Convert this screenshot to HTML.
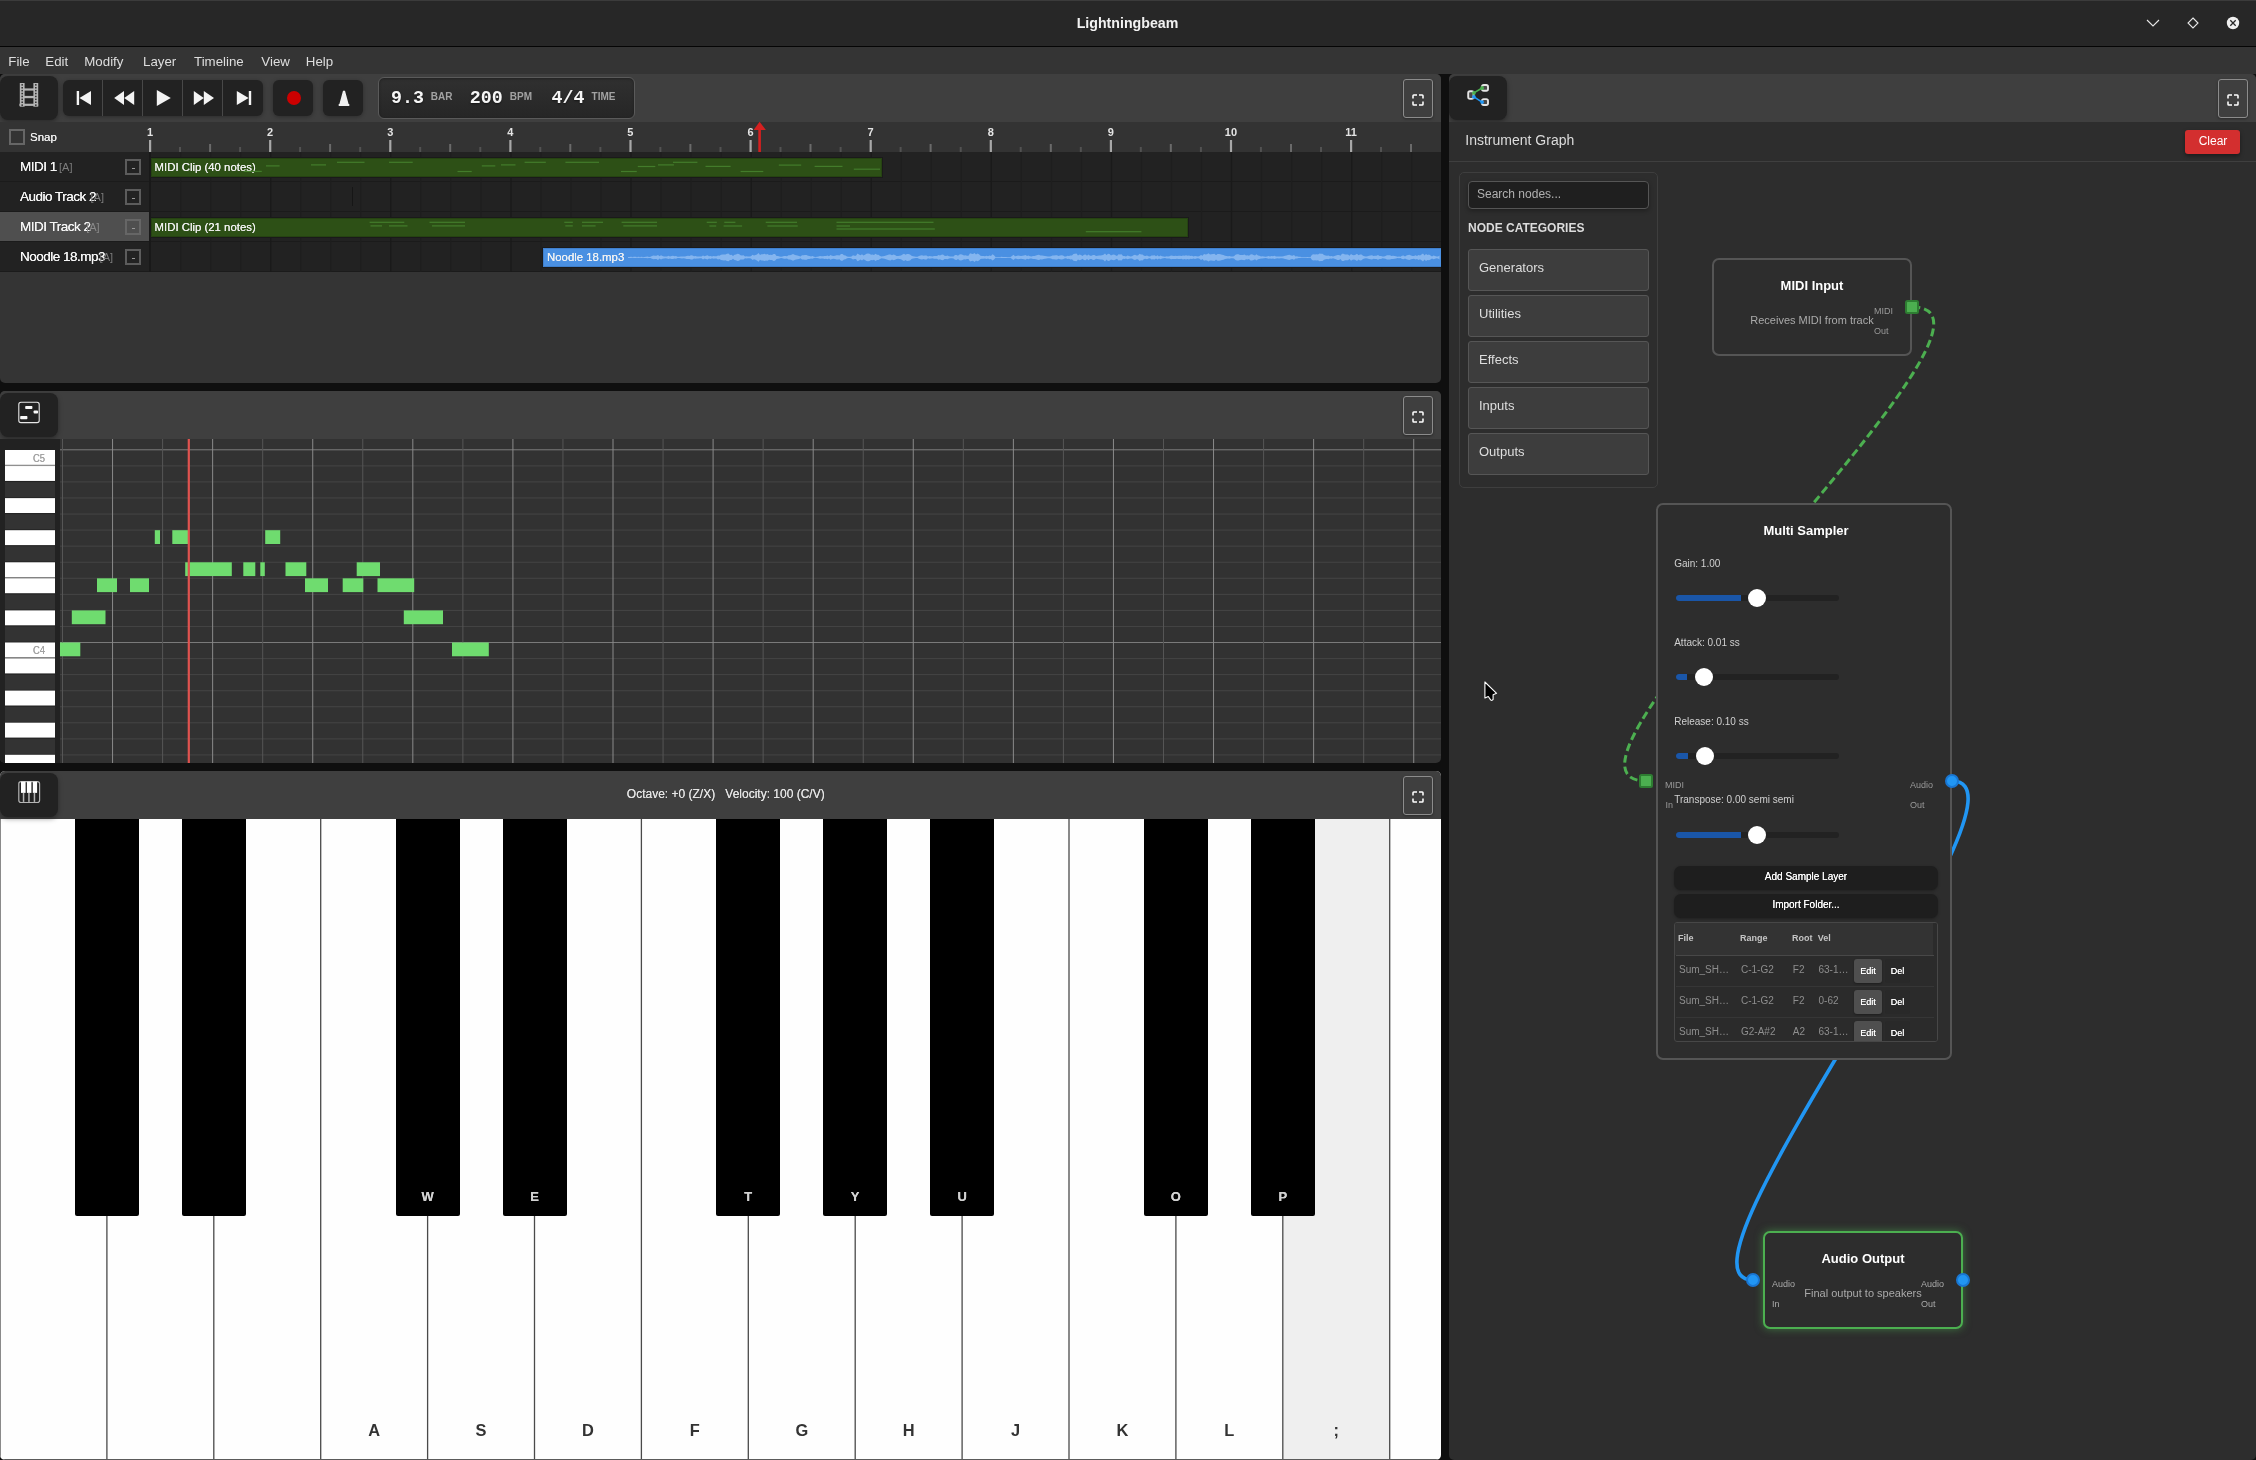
<!DOCTYPE html>
<html><head><meta charset="utf-8"><title>Lightningbeam</title>
<style>
html,body{margin:0;padding:0;}
body{width:2256px;height:1460px;overflow:hidden;background:#0f0f0f;position:relative;font-family:"Liberation Sans",sans-serif;}
div{position:absolute;box-sizing:border-box;}
svg{position:absolute;overflow:visible;}
.t{white-space:nowrap;}
</style></head><body><div id="root" style="left:0;top:0;width:2256px;height:1460px;will-change:transform;">

<div style="left:0px;top:0px;width:2256px;height:46px;background:#272727;border-top:1px solid #3b3b3b;"></div>
<div style="left:0px;top:46px;width:2256px;height:1px;background:#050505;"></div>
<div class="t" style="left:827.5px;width:600px;text-align:center;top:16.48px;font-size:14.2px;line-height:14.2px;height:14.2px;color:#f2f2f2;font-weight:bold;">Lightningbeam</div>
<svg style="left:2140px;top:10px" width="110" height="26" viewBox="2140 10 110 26">
<path d="M2147 20 L2153 26 L2159 20" fill="none" stroke="#e8e8e8" stroke-width="1.1"/>
<path d="M2193 18 L2198 23 L2193 28 L2188 23 Z" fill="none" stroke="#e8e8e8" stroke-width="1.1"/>
<circle cx="2233" cy="23" r="6.2" fill="#f0f0f0"/>
<path d="M2230.3 20.3 L2235.7 25.7 M2235.7 20.3 L2230.3 25.7" stroke="#272727" stroke-width="1.3"/>
</svg>
<div style="left:0px;top:47px;width:2256px;height:27px;background:#343434;"></div>
<div class="t" style="left:8.3px;top:54.74px;font-size:13.3px;line-height:13.3px;height:13.3px;color:#dedede;font-weight:normal;">File</div>
<div class="t" style="left:45.3px;top:54.74px;font-size:13.3px;line-height:13.3px;height:13.3px;color:#dedede;font-weight:normal;">Edit</div>
<div class="t" style="left:84.3px;top:54.74px;font-size:13.3px;line-height:13.3px;height:13.3px;color:#dedede;font-weight:normal;">Modify</div>
<div class="t" style="left:143px;top:54.74px;font-size:13.3px;line-height:13.3px;height:13.3px;color:#dedede;font-weight:normal;">Layer</div>
<div class="t" style="left:194px;top:54.74px;font-size:13.3px;line-height:13.3px;height:13.3px;color:#dedede;font-weight:normal;">Timeline</div>
<div class="t" style="left:261.3px;top:54.74px;font-size:13.3px;line-height:13.3px;height:13.3px;color:#dedede;font-weight:normal;">View</div>
<div class="t" style="left:305.8px;top:54.74px;font-size:13.3px;line-height:13.3px;height:13.3px;color:#dedede;font-weight:normal;">Help</div>
<div style="left:0px;top:74px;width:1441px;height:309px;background:#343434;border-radius:5px;overflow:hidden;">
<div style="left:0px;top:0px;width:1441px;height:48px;background:#3f3f3f;"></div>
<div style="left:0px;top:2px;width:58px;height:44px;background:#222;border-radius:8px;box-shadow:0 2px 5px rgba(0,0,0,.35);"></div>
<svg style="left:16px;top:6px" width="28" height="30" viewBox="16 80 28 30">
<g fill="#b5b5b5">
<rect x="19.8" y="83" width="4.8" height="23.7"/><rect x="33.4" y="83" width="4.8" height="23.7"/>
<rect x="24" y="88.4" width="10" height="2.2"/><rect x="24" y="95.9" width="10" height="2.3"/><rect x="19.4" y="103.7" width="18.8" height="2.2"/>
</g><g fill="#333">
<rect x="21.4" y="84.1" width="1.6" height="1.5"/><rect x="35" y="84.1" width="1.6" height="1.5"/>
<rect x="21.4" y="87.0" width="1.6" height="1.5"/><rect x="35" y="87.0" width="1.6" height="1.5"/>
<rect x="21.4" y="89.9" width="1.6" height="1.5"/><rect x="35" y="89.9" width="1.6" height="1.5"/>
<rect x="21.4" y="92.8" width="1.6" height="1.5"/><rect x="35" y="92.8" width="1.6" height="1.5"/>
<rect x="21.4" y="95.7" width="1.6" height="1.5"/><rect x="35" y="95.7" width="1.6" height="1.5"/>
<rect x="21.4" y="98.6" width="1.6" height="1.5"/><rect x="35" y="98.6" width="1.6" height="1.5"/>
<rect x="21.4" y="101.5" width="1.6" height="1.5"/><rect x="35" y="101.5" width="1.6" height="1.5"/>
<rect x="21.4" y="104.4" width="1.6" height="1.5"/><rect x="35" y="104.4" width="1.6" height="1.5"/>
</g>
</svg>
<div style="left:63px;top:6px;width:200px;height:36px;background:#222;border-radius:6px;box-shadow:0 1px 4px rgba(0,0,0,.3);"></div>
<div style="left:102px;top:6px;width:1px;height:36px;background:#484848;"></div>
<div style="left:142px;top:6px;width:1px;height:36px;background:#484848;"></div>
<div style="left:182px;top:6px;width:1px;height:36px;background:#484848;"></div>
<div style="left:222px;top:6px;width:1px;height:36px;background:#484848;"></div>
<svg style="left:63px;top:6px" width="300" height="36" viewBox="63 80 300 36">
<g fill="#f4f4f4">
<rect x="76.7" y="91" width="2.4" height="14"/><path d="M79.5 98 L91 91 L91 105 Z"/>
<path d="M114.2 98 L124 91 L124 105 Z"/><path d="M124.2 98 L134.2 91 L134.2 105 Z"/>
<path d="M156.8 90 L170.8 98 L156.8 106 Z"/>
<path d="M193.8 91 L203.8 98 L193.8 105 Z"/><path d="M203.8 91 L214 98 L203.8 105 Z"/>
<path d="M236.8 91 L248.6 98 L236.8 105 Z"/><rect x="248.8" y="91" width="2.4" height="14"/>
</g>
</svg>
<div style="left:273px;top:6px;width:40px;height:36px;background:#222;border-radius:6px;box-shadow:0 1px 4px rgba(0,0,0,.3);"></div>
<div style="left:287px;top:17px;width:14px;height:14px;background:#cc0000;border-radius:50%;"></div>
<div style="left:323px;top:6px;width:40px;height:36px;background:#222;border-radius:6px;box-shadow:0 1px 4px rgba(0,0,0,.3);"></div>
<svg style="left:335px;top:14px" width="20" height="20" viewBox="335 88 20 20">
<path d="M343 90.8 L345 90.8 L348.6 104 L349.3 104 L349.3 106 L338.7 106 L338.7 104 L339.4 104 Z" fill="#f0f0f0"/>
</svg>
<div style="left:378px;top:3px;width:257px;height:41.5px;border:1px solid #5a5a5a;border-radius:6px;background:linear-gradient(#303030,#262626);box-shadow:inset 0 1px 3px rgba(0,0,0,.3);"></div>
<div class="t" style="left:391px;top:15.38px;font-size:18.3px;line-height:18.3px;height:18.3px;color:#f6f6f6;font-weight:bold;font-family:'Liberation Mono', monospace;text-shadow:0 1px 2px rgba(0,0,0,.5);">9.3</div>
<div class="t" style="left:430.8px;top:17.54px;font-size:10px;line-height:10px;height:10px;color:#a2a2a2;font-weight:bold;">BAR</div>
<div class="t" style="left:469.8px;top:15.38px;font-size:18.3px;line-height:18.3px;height:18.3px;color:#f6f6f6;font-weight:bold;font-family:'Liberation Mono', monospace;text-shadow:0 1px 2px rgba(0,0,0,.5);">200</div>
<div class="t" style="left:509.8px;top:17.54px;font-size:10px;line-height:10px;height:10px;color:#a2a2a2;font-weight:bold;">BPM</div>
<div class="t" style="left:551.5px;top:15.38px;font-size:18.3px;line-height:18.3px;height:18.3px;color:#f6f6f6;font-weight:bold;font-family:'Liberation Mono', monospace;text-shadow:0 1px 2px rgba(0,0,0,.5);">4/4</div>
<div class="t" style="left:591.6px;top:17.54px;font-size:10px;line-height:10px;height:10px;color:#a2a2a2;font-weight:bold;">TIME</div>
<div style="left:1403px;top:5px;width:30px;height:39px;border:1px solid #8c8c8c;border-radius:3px;background:#3f3f3f;box-shadow:0 1px 3px rgba(0,0,0,.35);"></div>
<svg style="left:1411.2px;top:18.5px" width="14" height="14" viewBox="1411.2 92.5 14 14">
<path d="M1413.20 98.10 L1413.20 95.30 Q1413.20 94.50 1414.00 94.50 L1417.20 94.50 M1423.20 98.10 L1423.20 95.30 Q1423.20 94.50 1422.40 94.50 L1419.20 94.50 M1423.20 100.90 L1423.20 103.70 Q1423.20 104.50 1422.40 104.50 L1419.20 104.50 M1413.20 100.90 L1413.20 103.70 Q1413.20 104.50 1414.00 104.50 L1417.20 104.50 " fill="none" stroke="#ffffff" stroke-width="1.55"/>
</svg>
<div style="left:0px;top:48px;width:1441px;height:30px;background:#333;"></div>
<div style="left:9px;top:55px;width:16px;height:16px;border:2px solid #666;background:#333;"></div>
<div class="t" style="left:30px;top:57.77px;font-size:11.5px;line-height:11.5px;height:11.5px;color:#f0f0f0;font-weight:normal;text-shadow:0 0 .4px #eee;">Snap</div>
<svg style="left:150px;top:48px" width="1291" height="30" viewBox="150 122 1291 30">
<g fill="#a8a8a8"><rect x="149.0" y="140" width="2.2" height="12"/><rect x="269.1" y="140" width="2.2" height="12"/><rect x="389.2" y="140" width="2.2" height="12"/><rect x="509.3" y="140" width="2.2" height="12"/><rect x="629.4" y="140" width="2.2" height="12"/><rect x="749.5" y="140" width="2.2" height="12"/><rect x="869.6" y="140" width="2.2" height="12"/><rect x="989.7" y="140" width="2.2" height="12"/><rect x="1109.8" y="140" width="2.2" height="12"/><rect x="1229.9" y="140" width="2.2" height="12"/><rect x="1350.0" y="140" width="2.2" height="12"/></g><g fill="#6a6a6a"><rect x="209.1" y="144" width="2" height="8"/><rect x="329.1" y="144" width="2" height="8"/><rect x="449.2" y="144" width="2" height="8"/><rect x="569.3" y="144" width="2" height="8"/><rect x="689.4" y="144" width="2" height="8"/><rect x="809.5" y="144" width="2" height="8"/><rect x="929.6" y="144" width="2" height="8"/><rect x="1049.8" y="144" width="2" height="8"/><rect x="1169.8" y="144" width="2" height="8"/><rect x="1290.0" y="144" width="2" height="8"/><rect x="1410.0" y="144" width="2" height="8"/></g><g fill="#525252"><rect x="179.0" y="147" width="2" height="5"/><rect x="239.1" y="147" width="2" height="5"/><rect x="299.1" y="147" width="2" height="5"/><rect x="359.2" y="147" width="2" height="5"/><rect x="419.2" y="147" width="2" height="5"/><rect x="479.3" y="147" width="2" height="5"/><rect x="539.3" y="147" width="2" height="5"/><rect x="599.4" y="147" width="2" height="5"/><rect x="659.4" y="147" width="2" height="5"/><rect x="719.5" y="147" width="2" height="5"/><rect x="779.5" y="147" width="2" height="5"/><rect x="839.6" y="147" width="2" height="5"/><rect x="899.6" y="147" width="2" height="5"/><rect x="959.7" y="147" width="2" height="5"/><rect x="1019.7" y="147" width="2" height="5"/><rect x="1079.8" y="147" width="2" height="5"/><rect x="1139.8" y="147" width="2" height="5"/><rect x="1199.9" y="147" width="2" height="5"/><rect x="1259.9" y="147" width="2" height="5"/><rect x="1320.0" y="147" width="2" height="5"/><rect x="1380.0" y="147" width="2" height="5"/></g>
</svg>
<div class="t" style="left:-150.0px;width:600px;text-align:center;top:52.69px;font-size:11px;line-height:11px;height:11px;color:#e4e4e4;font-weight:bold;">1</div>
<div class="t" style="left:-29.899999999999977px;width:600px;text-align:center;top:52.69px;font-size:11px;line-height:11px;height:11px;color:#e4e4e4;font-weight:bold;">2</div>
<div class="t" style="left:90.19999999999999px;width:600px;text-align:center;top:52.69px;font-size:11px;line-height:11px;height:11px;color:#e4e4e4;font-weight:bold;">3</div>
<div class="t" style="left:210.29999999999995px;width:600px;text-align:center;top:52.69px;font-size:11px;line-height:11px;height:11px;color:#e4e4e4;font-weight:bold;">4</div>
<div class="t" style="left:330.4px;width:600px;text-align:center;top:52.69px;font-size:11px;line-height:11px;height:11px;color:#e4e4e4;font-weight:bold;">5</div>
<div class="t" style="left:450.5px;width:600px;text-align:center;top:52.69px;font-size:11px;line-height:11px;height:11px;color:#e4e4e4;font-weight:bold;">6</div>
<div class="t" style="left:570.5999999999999px;width:600px;text-align:center;top:52.69px;font-size:11px;line-height:11px;height:11px;color:#e4e4e4;font-weight:bold;">7</div>
<div class="t" style="left:690.6999999999999px;width:600px;text-align:center;top:52.69px;font-size:11px;line-height:11px;height:11px;color:#e4e4e4;font-weight:bold;">8</div>
<div class="t" style="left:810.8px;width:600px;text-align:center;top:52.69px;font-size:11px;line-height:11px;height:11px;color:#e4e4e4;font-weight:bold;">9</div>
<div class="t" style="left:930.8999999999999px;width:600px;text-align:center;top:52.69px;font-size:11px;line-height:11px;height:11px;color:#e4e4e4;font-weight:bold;">10</div>
<div class="t" style="left:1051.0px;width:600px;text-align:center;top:52.69px;font-size:11px;line-height:11px;height:11px;color:#e4e4e4;font-weight:bold;">11</div>
<div style="left:0px;top:78px;width:1441px;height:30px;background:#222;"></div>
<div style="left:0px;top:78px;width:149px;height:30px;background:#222;"></div>
<div style="left:0px;top:107px;width:1441px;height:1px;background:#1b1b1b;"></div>
<div class="t" style="left:20px;top:85.57px;font-size:13.5px;line-height:13.5px;height:13.5px;color:#f6f6f6;font-weight:normal;text-shadow:0 0 .5px #fff;letter-spacing:-.5px;">MIDI 1</div>
<div class="t" style="left:59px;top:88.19px;font-size:11px;line-height:11px;height:11px;color:#7d7d7d;font-weight:normal;">[A]</div>
<div style="left:125px;top:85px;width:16px;height:16px;border:2px solid #5c5c5c;"></div>
<div style="left:131.5px;top:93.6px;width:3px;height:1.2px;background:#999;"></div>
<div style="left:0px;top:108px;width:1441px;height:30px;background:#222;"></div>
<div style="left:0px;top:108px;width:149px;height:30px;background:#222;"></div>
<div style="left:0px;top:137px;width:1441px;height:1px;background:#1b1b1b;"></div>
<div class="t" style="left:20px;top:115.57px;font-size:13.5px;line-height:13.5px;height:13.5px;color:#f6f6f6;font-weight:normal;text-shadow:0 0 .5px #fff;letter-spacing:-.5px;">Audio Track 2</div>
<div class="t" style="left:90.5px;top:118.19px;font-size:11px;line-height:11px;height:11px;color:#7d7d7d;font-weight:normal;">[A]</div>
<div style="left:125px;top:115px;width:16px;height:16px;border:2px solid #5c5c5c;"></div>
<div style="left:131.5px;top:123.6px;width:3px;height:1.2px;background:#999;"></div>
<div style="left:0px;top:138px;width:1441px;height:30px;background:#222;"></div>
<div style="left:0px;top:138px;width:149px;height:30px;background:#4f4f4f;"></div>
<div style="left:0px;top:167px;width:1441px;height:1px;background:#1b1b1b;"></div>
<div class="t" style="left:20px;top:145.57px;font-size:13.5px;line-height:13.5px;height:13.5px;color:#f6f6f6;font-weight:normal;text-shadow:0 0 .5px #fff;letter-spacing:-.5px;">MIDI Track 2</div>
<div class="t" style="left:86.2px;top:148.19px;font-size:11px;line-height:11px;height:11px;color:#8a8a8a;font-weight:normal;">[A]</div>
<div style="left:125px;top:145px;width:16px;height:16px;border:2px solid #666;"></div>
<div style="left:131.5px;top:153.6px;width:3px;height:1.2px;background:#999;"></div>
<div style="left:0px;top:168px;width:1441px;height:30px;background:#222;"></div>
<div style="left:0px;top:168px;width:149px;height:30px;background:#222;"></div>
<div style="left:0px;top:197px;width:1441px;height:1px;background:#1b1b1b;"></div>
<div class="t" style="left:20px;top:175.57px;font-size:13.5px;line-height:13.5px;height:13.5px;color:#f6f6f6;font-weight:normal;text-shadow:0 0 .5px #fff;letter-spacing:-.5px;">Noodle 18.mp3</div>
<div class="t" style="left:99.6px;top:178.19px;font-size:11px;line-height:11px;height:11px;color:#7d7d7d;font-weight:normal;">[A]</div>
<div style="left:125px;top:175px;width:16px;height:16px;border:2px solid #5c5c5c;"></div>
<div style="left:131.5px;top:183.6px;width:3px;height:1.2px;background:#999;"></div>
<div style="left:149px;top:78px;width:1.5px;height:120px;background:#191919;"></div>
<svg style="left:150px;top:78px" width="1291" height="120" viewBox="150 152 1291 120">
<rect x="180.0" y="152" width="1.3" height="120" fill="#1e1e1e"/><rect x="210.1" y="152" width="1.3" height="120" fill="#1e1e1e"/><rect x="240.1" y="152" width="1.3" height="120" fill="#1e1e1e"/><rect x="270.1" y="152" width="1.3" height="120" fill="#1a1a1a"/><rect x="300.1" y="152" width="1.3" height="120" fill="#1e1e1e"/><rect x="330.1" y="152" width="1.3" height="120" fill="#1e1e1e"/><rect x="360.2" y="152" width="1.3" height="120" fill="#1e1e1e"/><rect x="390.2" y="152" width="1.3" height="120" fill="#1a1a1a"/><rect x="420.2" y="152" width="1.3" height="120" fill="#1e1e1e"/><rect x="450.2" y="152" width="1.3" height="120" fill="#1e1e1e"/><rect x="480.3" y="152" width="1.3" height="120" fill="#1e1e1e"/><rect x="510.3" y="152" width="1.3" height="120" fill="#1a1a1a"/><rect x="540.3" y="152" width="1.3" height="120" fill="#1e1e1e"/><rect x="570.3" y="152" width="1.3" height="120" fill="#1e1e1e"/><rect x="600.4" y="152" width="1.3" height="120" fill="#1e1e1e"/><rect x="630.4" y="152" width="1.3" height="120" fill="#1a1a1a"/><rect x="660.4" y="152" width="1.3" height="120" fill="#1e1e1e"/><rect x="690.4" y="152" width="1.3" height="120" fill="#1e1e1e"/><rect x="720.5" y="152" width="1.3" height="120" fill="#1e1e1e"/><rect x="750.5" y="152" width="1.3" height="120" fill="#1a1a1a"/><rect x="780.5" y="152" width="1.3" height="120" fill="#1e1e1e"/><rect x="810.5" y="152" width="1.3" height="120" fill="#1e1e1e"/><rect x="840.6" y="152" width="1.3" height="120" fill="#1e1e1e"/><rect x="870.6" y="152" width="1.3" height="120" fill="#1a1a1a"/><rect x="900.6" y="152" width="1.3" height="120" fill="#1e1e1e"/><rect x="930.6" y="152" width="1.3" height="120" fill="#1e1e1e"/><rect x="960.7" y="152" width="1.3" height="120" fill="#1e1e1e"/><rect x="990.7" y="152" width="1.3" height="120" fill="#1a1a1a"/><rect x="1020.7" y="152" width="1.3" height="120" fill="#1e1e1e"/><rect x="1050.8" y="152" width="1.3" height="120" fill="#1e1e1e"/><rect x="1080.8" y="152" width="1.3" height="120" fill="#1e1e1e"/><rect x="1110.8" y="152" width="1.3" height="120" fill="#1a1a1a"/><rect x="1140.8" y="152" width="1.3" height="120" fill="#1e1e1e"/><rect x="1170.8" y="152" width="1.3" height="120" fill="#1e1e1e"/><rect x="1200.9" y="152" width="1.3" height="120" fill="#1e1e1e"/><rect x="1230.9" y="152" width="1.3" height="120" fill="#1a1a1a"/><rect x="1260.9" y="152" width="1.3" height="120" fill="#1e1e1e"/><rect x="1291.0" y="152" width="1.3" height="120" fill="#1e1e1e"/><rect x="1321.0" y="152" width="1.3" height="120" fill="#1e1e1e"/><rect x="1351.0" y="152" width="1.3" height="120" fill="#1a1a1a"/><rect x="1381.0" y="152" width="1.3" height="120" fill="#1e1e1e"/><rect x="1411.0" y="152" width="1.3" height="120" fill="#1e1e1e"/>
</svg>
<div style="left:150.5px;top:83.5px;width:731px;height:19.5px;background:#2d5016;border:1px solid #264312;box-shadow:0 0 0 1px #1a1a1a;"></div>
<div class="t" style="left:154.5px;top:87.85px;font-size:11.4px;line-height:11.4px;height:11.4px;color:#efefef;font-weight:normal;text-shadow:0 0 .4px #fff;">MIDI Clip (40 notes)</div>
<div style="left:150.5px;top:143.5px;width:1037px;height:19.5px;background:#2d5016;border:1px solid #264312;box-shadow:0 0 0 1px #1a1a1a;"></div>
<div class="t" style="left:154.5px;top:147.85px;font-size:11.4px;line-height:11.4px;height:11.4px;color:#efefef;font-weight:normal;text-shadow:0 0 .4px #fff;">MIDI Clip (21 notes)</div>
<div style="left:543px;top:173.5px;width:900px;height:19.5px;background:#4a90e2;border:1px solid #3f7fcc;box-shadow:0 0 0 1px #1a1a1a;"></div>
<div class="t" style="left:547px;top:177.85px;font-size:11.4px;line-height:11.4px;height:11.4px;color:#efefef;font-weight:normal;text-shadow:0 0 .4px #fff;">Noodle 18.mp3</div>
<div style="left:351.5px;top:113px;width:1.2px;height:19px;background:#161616;"></div>
<svg style="left:150px;top:78px" width="1291" height="120" viewBox="150 152 1291 120">
<g fill="#437c2b"><rect x="243.6" y="170.8" width="18.2" height="1.2"/><rect x="266" y="165.3" width="13.6" height="1.2"/><rect x="311" y="164.3" width="15.0" height="1.2"/><rect x="337" y="161.7" width="27.5" height="1.2"/><rect x="389" y="161.7" width="23.7" height="1.2"/><rect x="457.5" y="170.9" width="14.2" height="1.2"/><rect x="481.8" y="165.3" width="13.5" height="1.2"/><rect x="501" y="164.3" width="14.5" height="1.2"/><rect x="524.6" y="161.7" width="21.2" height="1.2"/><rect x="565.4" y="161.7" width="33.6" height="1.2"/><rect x="621" y="170.9" width="15.8" height="1.2"/><rect x="637.8" y="165.9" width="17.5" height="1.2"/><rect x="658" y="164.3" width="15.9" height="1.2"/><rect x="673" y="161.7" width="24.4" height="1.2"/><rect x="705.5" y="165.8" width="25.1" height="1.2"/><rect x="740.6" y="170.9" width="22.7" height="1.2"/><rect x="778.8" y="164.5" width="22.4" height="1.2"/><rect x="814.6" y="165.8" width="27.9" height="1.2"/><rect x="853.8" y="168.6" width="26.2" height="1.2"/><rect x="369.6" y="221.7" width="34.7" height="1.2"/><rect x="370.5" y="225.3" width="11.5" height="1.2"/><rect x="389" y="225.3" width="18.5" height="1.2"/><rect x="429.5" y="221.7" width="35.5" height="1.2"/><rect x="432" y="225.3" width="33.0" height="1.2"/><rect x="564.3" y="221.7" width="8.5" height="1.2"/><rect x="582" y="221.7" width="21.0" height="1.2"/><rect x="565.3" y="225.3" width="7.5" height="1.2"/><rect x="582" y="225.3" width="13.6" height="1.2"/><rect x="621.6" y="221.7" width="35.4" height="1.2"/><rect x="623.3" y="225.3" width="33.7" height="1.2"/><rect x="706.7" y="221.7" width="10.1" height="1.2"/><rect x="724.3" y="221.7" width="11.1" height="1.2"/><rect x="709.4" y="225.4" width="6.8" height="1.2"/><rect x="723.6" y="225.4" width="18.5" height="1.2"/><rect x="765.7" y="221.7" width="31.3" height="1.2"/><rect x="767.4" y="225.4" width="30.3" height="1.2"/><rect x="836.5" y="221.7" width="97.0" height="1.2"/><rect x="836.5" y="225.4" width="13.5" height="1.2"/><rect x="836.5" y="228.4" width="98.3" height="1.2"/><rect x="1085.8" y="231.1" width="55.6" height="1.2"/></g>
<polygon points="628.0,256.9 629.5,256.9 631.0,256.7 632.5,257.1 634.0,256.8 635.5,256.8 637.0,257.0 638.5,256.7 640.0,257.0 641.5,256.8 643.0,257.0 644.5,256.9 646.0,256.7 647.5,256.5 649.0,256.9 650.5,256.7 652.0,256.1 653.5,255.5 655.0,255.7 656.5,255.8 658.0,254.9 659.5,256.3 661.0,255.2 662.5,256.1 664.0,256.4 665.5,256.6 667.0,256.4 668.5,255.8 670.0,256.4 671.5,255.9 673.0,255.8 674.5,256.2 676.0,256.1 677.5,256.7 679.0,256.7 680.5,256.6 682.0,256.4 683.5,256.5 685.0,256.4 686.5,255.9 688.0,255.8 689.5,255.9 691.0,255.2 692.5,255.4 694.0,256.2 695.5,256.0 697.0,256.4 698.5,256.4 700.0,256.5 701.5,256.5 703.0,255.4 704.5,256.2 706.0,255.7 707.5,255.2 709.0,256.2 710.5,255.9 712.0,256.6 713.5,256.1 715.0,256.2 716.5,256.3 718.0,255.4 719.5,255.7 721.0,254.7 722.5,254.6 724.0,254.4 725.5,254.6 727.0,253.7 728.5,253.6 730.0,254.9 731.5,254.8 733.0,256.0 734.5,254.7 736.0,254.6 737.5,253.8 739.0,254.1 740.5,255.3 742.0,255.4 743.5,255.2 745.0,256.5 746.5,256.3 748.0,256.6 749.5,256.6 751.0,256.3 752.5,254.7 754.0,255.5 755.5,255.0 757.0,254.4 758.5,253.0 760.0,255.1 761.5,254.3 763.0,254.2 764.5,253.8 766.0,254.4 767.5,254.0 769.0,255.1 770.5,254.8 772.0,254.9 773.5,253.9 775.0,254.1 776.5,255.9 778.0,256.1 779.5,256.4 781.0,256.7 782.5,256.6 784.0,256.0 785.5,256.0 787.0,256.2 788.5,255.2 790.0,255.2 791.5,254.7 793.0,254.0 794.5,254.7 796.0,255.3 797.5,255.5 799.0,255.9 800.5,256.5 802.0,255.2 803.5,255.2 805.0,255.0 806.5,255.1 808.0,255.8 809.5,255.9 811.0,256.4 812.5,256.1 814.0,256.8 815.5,257.0 817.0,256.8 818.5,256.6 820.0,256.1 821.5,256.3 823.0,256.2 824.5,255.9 826.0,256.0 827.5,255.6 829.0,256.2 830.5,255.1 832.0,255.7 833.5,256.1 835.0,255.7 836.5,255.3 838.0,255.2 839.5,255.6 841.0,254.1 842.5,254.0 844.0,255.3 845.5,255.6 847.0,256.5 848.5,256.8 850.0,256.7 851.5,256.4 853.0,255.2 854.5,255.8 856.0,255.8 857.5,253.6 859.0,254.4 860.5,255.2 862.0,254.3 863.5,255.6 865.0,254.7 866.5,253.8 868.0,253.6 869.5,253.8 871.0,254.7 872.5,254.5 874.0,255.1 875.5,253.8 877.0,254.7 878.5,254.7 880.0,255.9 881.5,256.5 883.0,256.3 884.5,256.0 886.0,255.5 887.5,255.0 889.0,254.5 890.5,254.4 892.0,255.3 893.5,254.6 895.0,255.1 896.5,255.9 898.0,256.0 899.5,255.7 901.0,255.5 902.5,254.5 904.0,253.8 905.5,254.8 907.0,253.9 908.5,254.0 910.0,254.4 911.5,255.7 913.0,256.2 914.5,256.5 916.0,256.8 917.5,256.7 919.0,256.1 920.5,255.5 922.0,255.3 923.5,255.7 925.0,255.4 926.5,255.4 928.0,256.5 929.5,256.1 931.0,256.2 932.5,256.6 934.0,256.1 935.5,256.0 937.0,256.1 938.5,255.0 940.0,255.6 941.5,254.7 943.0,254.5 944.5,255.7 946.0,255.9 947.5,255.6 949.0,256.3 950.5,256.6 952.0,256.5 953.5,256.4 955.0,255.1 956.5,254.9 958.0,255.8 959.5,254.5 961.0,254.2 962.5,254.8 964.0,255.5 965.5,255.3 967.0,255.7 968.5,255.7 970.0,253.2 971.5,253.7 973.0,254.0 974.5,252.9 976.0,254.4 977.5,253.6 979.0,254.2 980.5,255.8 982.0,256.1 983.5,256.1 985.0,256.2 986.5,255.7 988.0,256.2 989.5,255.6 991.0,255.9 992.5,254.3 994.0,255.2 995.5,257.0 997.0,257.0 998.5,257.0 1000.0,257.1 1001.5,256.8 1003.0,256.9 1004.5,256.9 1006.0,256.9 1007.5,257.1 1009.0,257.0 1010.5,257.1 1012.0,255.9 1013.5,254.8 1015.0,256.2 1016.5,256.0 1018.0,255.6 1019.5,255.7 1021.0,256.0 1022.5,255.8 1024.0,255.5 1025.5,255.1 1027.0,256.1 1028.5,255.6 1030.0,256.2 1031.5,256.4 1033.0,255.9 1034.5,255.9 1036.0,255.6 1037.5,255.1 1039.0,254.8 1040.5,255.6 1042.0,255.4 1043.5,255.8 1045.0,256.1 1046.5,256.2 1048.0,256.6 1049.5,256.6 1051.0,256.3 1052.5,255.6 1054.0,255.6 1055.5,255.3 1057.0,255.2 1058.5,256.0 1060.0,255.6 1061.5,255.2 1063.0,255.5 1064.5,256.4 1066.0,256.5 1067.5,255.7 1069.0,256.0 1070.5,255.4 1072.0,255.6 1073.5,254.1 1075.0,253.7 1076.5,253.6 1078.0,255.4 1079.5,254.5 1081.0,255.0 1082.5,256.1 1084.0,254.8 1085.5,254.6 1087.0,255.8 1088.5,254.6 1090.0,255.7 1091.5,255.8 1093.0,254.9 1094.5,255.1 1096.0,256.0 1097.5,255.7 1099.0,255.6 1100.5,255.4 1102.0,255.3 1103.5,254.7 1105.0,253.4 1106.5,255.2 1108.0,253.7 1109.5,254.1 1111.0,255.4 1112.5,254.8 1114.0,254.6 1115.5,255.3 1117.0,256.0 1118.5,254.2 1120.0,254.6 1121.5,254.3 1123.0,256.0 1124.5,255.9 1126.0,256.4 1127.5,255.5 1129.0,256.1 1130.5,256.4 1132.0,256.2 1133.5,255.2 1135.0,254.8 1136.5,255.5 1138.0,255.6 1139.5,253.8 1141.0,254.6 1142.5,254.4 1144.0,255.8 1145.5,256.1 1147.0,255.5 1148.5,256.2 1150.0,256.5 1151.5,255.4 1153.0,255.6 1154.5,255.3 1156.0,256.2 1157.5,255.2 1159.0,256.4 1160.5,255.6 1162.0,256.2 1163.5,256.6 1165.0,256.7 1166.5,256.3 1168.0,256.4 1169.5,256.3 1171.0,255.5 1172.5,255.8 1174.0,255.9 1175.5,255.8 1177.0,256.0 1178.5,255.8 1180.0,255.8 1181.5,256.0 1183.0,255.4 1184.5,255.8 1186.0,255.3 1187.5,255.7 1189.0,255.4 1190.5,256.1 1192.0,255.8 1193.5,256.4 1195.0,255.9 1196.5,256.2 1198.0,256.6 1199.5,256.1 1201.0,254.9 1202.5,255.8 1204.0,254.0 1205.5,254.5 1207.0,254.2 1208.5,253.2 1210.0,254.4 1211.5,254.2 1213.0,254.0 1214.5,253.7 1216.0,255.2 1217.5,254.0 1219.0,254.1 1220.5,254.2 1222.0,254.8 1223.5,255.0 1225.0,255.8 1226.5,256.0 1228.0,256.3 1229.5,256.1 1231.0,256.6 1232.5,256.6 1234.0,256.3 1235.5,254.7 1237.0,254.2 1238.5,254.2 1240.0,254.9 1241.5,255.0 1243.0,254.9 1244.5,254.6 1246.0,255.5 1247.5,255.2 1249.0,255.8 1250.5,254.4 1252.0,254.2 1253.5,254.9 1255.0,255.5 1256.5,254.2 1258.0,255.6 1259.5,255.7 1261.0,256.4 1262.5,256.3 1264.0,256.6 1265.5,256.8 1267.0,256.6 1268.5,256.1 1270.0,256.4 1271.5,256.0 1273.0,256.2 1274.5,255.8 1276.0,256.4 1277.5,256.5 1279.0,256.4 1280.5,256.6 1282.0,256.6 1283.5,256.3 1285.0,255.7 1286.5,255.5 1288.0,255.1 1289.5,254.7 1291.0,255.5 1292.5,255.7 1294.0,255.0 1295.5,256.4 1297.0,256.2 1298.5,256.7 1300.0,256.8 1301.5,257.1 1303.0,257.1 1304.5,257.0 1306.0,257.0 1307.5,256.9 1309.0,257.1 1310.5,257.0 1312.0,254.8 1313.5,254.3 1315.0,254.6 1316.5,254.3 1318.0,254.5 1319.5,253.5 1321.0,253.8 1322.5,253.8 1324.0,255.0 1325.5,255.6 1327.0,255.7 1328.5,255.6 1330.0,256.3 1331.5,256.1 1333.0,256.5 1334.5,256.1 1336.0,255.5 1337.5,254.9 1339.0,254.9 1340.5,255.7 1342.0,253.8 1343.5,253.8 1345.0,254.5 1346.5,254.6 1348.0,254.6 1349.5,255.7 1351.0,254.0 1352.5,255.0 1354.0,255.3 1355.5,254.8 1357.0,253.8 1358.5,255.2 1360.0,254.4 1361.5,254.5 1363.0,255.7 1364.5,256.3 1366.0,256.5 1367.5,256.2 1369.0,255.8 1370.5,255.5 1372.0,255.2 1373.5,256.0 1375.0,255.8 1376.5,255.7 1378.0,255.1 1379.5,255.9 1381.0,255.9 1382.5,256.6 1384.0,256.4 1385.5,256.0 1387.0,255.3 1388.5,255.2 1390.0,255.3 1391.5,255.9 1393.0,255.8 1394.5,256.1 1396.0,256.3 1397.5,256.8 1399.0,256.5 1400.5,256.7 1402.0,255.7 1403.5,255.5 1405.0,256.4 1406.5,255.6 1408.0,255.0 1409.5,254.7 1411.0,255.6 1412.5,255.9 1414.0,256.1 1415.5,255.3 1417.0,255.9 1418.5,254.9 1420.0,255.5 1421.5,254.5 1423.0,253.4 1424.5,255.4 1426.0,253.9 1427.5,254.9 1429.0,254.6 1430.5,255.4 1432.0,256.4 1433.5,255.5 1435.0,256.0 1436.5,256.5 1438.0,256.4 1439.5,255.4 1439.5,259.4 1438.0,258.4 1436.5,258.3 1435.0,258.8 1433.5,259.3 1432.0,258.4 1430.5,259.4 1429.0,260.2 1427.5,259.9 1426.0,260.9 1424.5,259.4 1423.0,261.4 1421.5,260.3 1420.0,259.3 1418.5,259.9 1417.0,258.9 1415.5,259.5 1414.0,258.7 1412.5,258.9 1411.0,259.2 1409.5,260.1 1408.0,259.8 1406.5,259.2 1405.0,258.4 1403.5,259.3 1402.0,259.1 1400.5,258.1 1399.0,258.3 1397.5,258.0 1396.0,258.5 1394.5,258.7 1393.0,259.0 1391.5,258.9 1390.0,259.5 1388.5,259.6 1387.0,259.5 1385.5,258.8 1384.0,258.4 1382.5,258.2 1381.0,258.9 1379.5,258.9 1378.0,259.7 1376.5,259.1 1375.0,259.0 1373.5,258.8 1372.0,259.6 1370.5,259.3 1369.0,259.0 1367.5,258.6 1366.0,258.3 1364.5,258.5 1363.0,259.1 1361.5,260.3 1360.0,260.4 1358.5,259.6 1357.0,261.0 1355.5,260.0 1354.0,259.5 1352.5,259.8 1351.0,260.8 1349.5,259.1 1348.0,260.2 1346.5,260.2 1345.0,260.3 1343.5,261.0 1342.0,261.0 1340.5,259.1 1339.0,259.9 1337.5,259.9 1336.0,259.3 1334.5,258.7 1333.0,258.3 1331.5,258.7 1330.0,258.5 1328.5,259.2 1327.0,259.1 1325.5,259.2 1324.0,259.8 1322.5,261.0 1321.0,261.0 1319.5,261.3 1318.0,260.3 1316.5,260.5 1315.0,260.2 1313.5,260.5 1312.0,260.0 1310.5,257.8 1309.0,257.7 1307.5,257.9 1306.0,257.8 1304.5,257.8 1303.0,257.7 1301.5,257.7 1300.0,258.0 1298.5,258.1 1297.0,258.6 1295.5,258.4 1294.0,259.8 1292.5,259.1 1291.0,259.3 1289.5,260.1 1288.0,259.7 1286.5,259.3 1285.0,259.1 1283.5,258.5 1282.0,258.2 1280.5,258.2 1279.0,258.4 1277.5,258.3 1276.0,258.4 1274.5,259.0 1273.0,258.6 1271.5,258.8 1270.0,258.4 1268.5,258.7 1267.0,258.2 1265.5,258.0 1264.0,258.2 1262.5,258.5 1261.0,258.4 1259.5,259.1 1258.0,259.2 1256.5,260.6 1255.0,259.3 1253.5,259.9 1252.0,260.6 1250.5,260.4 1249.0,259.0 1247.5,259.6 1246.0,259.3 1244.5,260.2 1243.0,259.9 1241.5,259.8 1240.0,259.9 1238.5,260.6 1237.0,260.6 1235.5,260.1 1234.0,258.5 1232.5,258.2 1231.0,258.2 1229.5,258.7 1228.0,258.5 1226.5,258.8 1225.0,259.0 1223.5,259.8 1222.0,260.0 1220.5,260.6 1219.0,260.7 1217.5,260.8 1216.0,259.6 1214.5,261.1 1213.0,260.8 1211.5,260.6 1210.0,260.4 1208.5,261.6 1207.0,260.6 1205.5,260.3 1204.0,260.8 1202.5,259.0 1201.0,259.9 1199.5,258.7 1198.0,258.2 1196.5,258.6 1195.0,258.9 1193.5,258.4 1192.0,259.0 1190.5,258.7 1189.0,259.4 1187.5,259.1 1186.0,259.5 1184.5,259.0 1183.0,259.4 1181.5,258.8 1180.0,259.0 1178.5,259.0 1177.0,258.8 1175.5,259.0 1174.0,258.9 1172.5,259.0 1171.0,259.3 1169.5,258.5 1168.0,258.4 1166.5,258.5 1165.0,258.1 1163.5,258.2 1162.0,258.6 1160.5,259.2 1159.0,258.4 1157.5,259.6 1156.0,258.6 1154.5,259.5 1153.0,259.2 1151.5,259.4 1150.0,258.3 1148.5,258.6 1147.0,259.3 1145.5,258.7 1144.0,259.0 1142.5,260.4 1141.0,260.2 1139.5,261.0 1138.0,259.2 1136.5,259.3 1135.0,260.0 1133.5,259.6 1132.0,258.6 1130.5,258.4 1129.0,258.7 1127.5,259.3 1126.0,258.4 1124.5,258.9 1123.0,258.8 1121.5,260.5 1120.0,260.2 1118.5,260.6 1117.0,258.8 1115.5,259.5 1114.0,260.2 1112.5,260.0 1111.0,259.4 1109.5,260.7 1108.0,261.1 1106.5,259.6 1105.0,261.4 1103.5,260.1 1102.0,259.5 1100.5,259.4 1099.0,259.2 1097.5,259.1 1096.0,258.8 1094.5,259.7 1093.0,259.9 1091.5,259.0 1090.0,259.1 1088.5,260.2 1087.0,259.0 1085.5,260.2 1084.0,260.0 1082.5,258.7 1081.0,259.8 1079.5,260.3 1078.0,259.4 1076.5,261.2 1075.0,261.1 1073.5,260.7 1072.0,259.2 1070.5,259.4 1069.0,258.8 1067.5,259.1 1066.0,258.3 1064.5,258.4 1063.0,259.3 1061.5,259.6 1060.0,259.2 1058.5,258.8 1057.0,259.6 1055.5,259.5 1054.0,259.2 1052.5,259.2 1051.0,258.5 1049.5,258.2 1048.0,258.2 1046.5,258.6 1045.0,258.7 1043.5,259.0 1042.0,259.4 1040.5,259.2 1039.0,260.0 1037.5,259.7 1036.0,259.2 1034.5,258.9 1033.0,258.9 1031.5,258.4 1030.0,258.6 1028.5,259.2 1027.0,258.7 1025.5,259.7 1024.0,259.3 1022.5,259.0 1021.0,258.8 1019.5,259.1 1018.0,259.2 1016.5,258.8 1015.0,258.6 1013.5,260.0 1012.0,258.9 1010.5,257.7 1009.0,257.8 1007.5,257.7 1006.0,257.9 1004.5,257.9 1003.0,257.9 1001.5,258.0 1000.0,257.7 998.5,257.8 997.0,257.8 995.5,257.8 994.0,259.6 992.5,260.5 991.0,258.9 989.5,259.2 988.0,258.6 986.5,259.1 985.0,258.6 983.5,258.7 982.0,258.7 980.5,259.0 979.0,260.6 977.5,261.2 976.0,260.4 974.5,261.9 973.0,260.8 971.5,261.1 970.0,261.6 968.5,259.1 967.0,259.1 965.5,259.5 964.0,259.3 962.5,260.0 961.0,260.6 959.5,260.3 958.0,259.0 956.5,259.9 955.0,259.7 953.5,258.4 952.0,258.3 950.5,258.2 949.0,258.5 947.5,259.2 946.0,258.9 944.5,259.1 943.0,260.3 941.5,260.1 940.0,259.2 938.5,259.8 937.0,258.7 935.5,258.8 934.0,258.7 932.5,258.2 931.0,258.6 929.5,258.7 928.0,258.3 926.5,259.4 925.0,259.4 923.5,259.1 922.0,259.5 920.5,259.3 919.0,258.7 917.5,258.1 916.0,258.0 914.5,258.3 913.0,258.6 911.5,259.1 910.0,260.4 908.5,260.8 907.0,260.9 905.5,260.0 904.0,261.0 902.5,260.3 901.0,259.3 899.5,259.1 898.0,258.8 896.5,258.9 895.0,259.7 893.5,260.2 892.0,259.5 890.5,260.4 889.0,260.3 887.5,259.8 886.0,259.3 884.5,258.8 883.0,258.5 881.5,258.3 880.0,258.9 878.5,260.1 877.0,260.1 875.5,261.0 874.0,259.7 872.5,260.3 871.0,260.1 869.5,261.0 868.0,261.2 866.5,261.0 865.0,260.1 863.5,259.2 862.0,260.5 860.5,259.6 859.0,260.4 857.5,261.2 856.0,259.0 854.5,259.0 853.0,259.6 851.5,258.4 850.0,258.1 848.5,258.0 847.0,258.3 845.5,259.2 844.0,259.5 842.5,260.8 841.0,260.7 839.5,259.2 838.0,259.6 836.5,259.5 835.0,259.1 833.5,258.7 832.0,259.1 830.5,259.7 829.0,258.6 827.5,259.2 826.0,258.8 824.5,258.9 823.0,258.6 821.5,258.5 820.0,258.7 818.5,258.2 817.0,258.0 815.5,257.8 814.0,258.0 812.5,258.7 811.0,258.4 809.5,258.9 808.0,259.0 806.5,259.7 805.0,259.8 803.5,259.6 802.0,259.6 800.5,258.3 799.0,258.9 797.5,259.3 796.0,259.5 794.5,260.1 793.0,260.8 791.5,260.1 790.0,259.6 788.5,259.6 787.0,258.6 785.5,258.8 784.0,258.8 782.5,258.2 781.0,258.1 779.5,258.4 778.0,258.7 776.5,258.9 775.0,260.7 773.5,260.9 772.0,259.9 770.5,260.0 769.0,259.7 767.5,260.8 766.0,260.4 764.5,261.0 763.0,260.6 761.5,260.5 760.0,259.7 758.5,261.8 757.0,260.4 755.5,259.8 754.0,259.3 752.5,260.1 751.0,258.5 749.5,258.2 748.0,258.2 746.5,258.5 745.0,258.3 743.5,259.6 742.0,259.4 740.5,259.5 739.0,260.7 737.5,261.0 736.0,260.2 734.5,260.1 733.0,258.8 731.5,260.0 730.0,259.9 728.5,261.2 727.0,261.1 725.5,260.2 724.0,260.4 722.5,260.2 721.0,260.1 719.5,259.1 718.0,259.4 716.5,258.5 715.0,258.6 713.5,258.7 712.0,258.2 710.5,258.9 709.0,258.6 707.5,259.6 706.0,259.1 704.5,258.6 703.0,259.4 701.5,258.3 700.0,258.3 698.5,258.4 697.0,258.4 695.5,258.8 694.0,258.6 692.5,259.4 691.0,259.6 689.5,258.9 688.0,259.0 686.5,258.9 685.0,258.4 683.5,258.3 682.0,258.4 680.5,258.2 679.0,258.1 677.5,258.1 676.0,258.7 674.5,258.6 673.0,259.0 671.5,258.9 670.0,258.4 668.5,259.0 667.0,258.4 665.5,258.2 664.0,258.4 662.5,258.7 661.0,259.6 659.5,258.5 658.0,259.9 656.5,259.0 655.0,259.1 653.5,259.3 652.0,258.7 650.5,258.1 649.0,257.9 647.5,258.3 646.0,258.1 644.5,257.9 643.0,257.8 641.5,258.0 640.0,257.8 638.5,258.1 637.0,257.8 635.5,258.0 634.0,258.0 632.5,257.7 631.0,258.1 629.5,257.9 628.0,257.9" fill="#84b5ef"/>
</svg>
<svg style="left:750px;top:46px" width="20" height="34" viewBox="750 120 20 34">
<path d="M759.6 121.8 L765.9 129.9 L753.6 129.9 Z" fill="#d42020"/><rect x="758.3" y="129" width="2.6" height="23" fill="#d42020"/>
</svg>
</div>
<div style="left:0px;top:391px;width:1441px;height:372px;background:#323232;border-radius:5px;overflow:hidden;">
<div style="left:0px;top:0px;width:1441px;height:48px;background:#3f3f3f;"></div>
<div style="left:0px;top:2px;width:58px;height:44px;background:#222;border-radius:8px;box-shadow:0 2px 5px rgba(0,0,0,.35);"></div>
<svg style="left:16px;top:7px" width="28" height="28" viewBox="16 398 28 28">
<rect x="18.8" y="402.2" width="20.4" height="20.4" rx="2.2" fill="none" stroke="#e8e8e8" stroke-width="1.1"/>
<g fill="#fafafa"><rect x="25.2" y="406" width="7.2" height="3" rx=".8"/><rect x="33.6" y="410.4" width="4.4" height="3.2" rx=".8"/><rect x="20.2" y="416" width="7.2" height="3.2" rx=".8"/></g>
</svg>
<div style="left:1403px;top:5px;width:30px;height:39px;border:1px solid #8c8c8c;border-radius:3px;background:#3f3f3f;box-shadow:0 1px 3px rgba(0,0,0,.35);"></div>
<svg style="left:1411.2px;top:18.5px" width="14" height="14" viewBox="1411.2 409.5 14 14">
<path d="M1413.20 415.10 L1413.20 412.30 Q1413.20 411.50 1414.00 411.50 L1417.20 411.50 M1423.20 415.10 L1423.20 412.30 Q1423.20 411.50 1422.40 411.50 L1419.20 411.50 M1423.20 417.90 L1423.20 420.70 Q1423.20 421.50 1422.40 421.50 L1419.20 421.50 M1413.20 417.90 L1413.20 420.70 Q1413.20 421.50 1414.00 421.50 L1417.20 421.50 " fill="none" stroke="#ffffff" stroke-width="1.55"/>
</svg>
<div style="left:0px;top:48px;width:60px;height:324px;background:#222;"></div>
<svg style="left:0px;top:48px" width="60" height="324" viewBox="0 439 60 324">
<rect x="5" y="450.00" width="50" height="14.9" fill="#fff"/><rect x="5" y="464.90" width="50" height="1.3" fill="#909090"/><rect x="5" y="466.04" width="50" height="14.9" fill="#fff"/><rect x="5" y="482.08" width="50" height="15.2" fill="#333"/><rect x="5" y="498.12" width="50" height="14.9" fill="#fff"/><rect x="5" y="514.16" width="50" height="15.2" fill="#333"/><rect x="5" y="530.20" width="50" height="14.9" fill="#fff"/><rect x="5" y="546.24" width="50" height="15.2" fill="#333"/><rect x="5" y="562.28" width="50" height="14.9" fill="#fff"/><rect x="5" y="577.18" width="50" height="1.3" fill="#909090"/><rect x="5" y="578.32" width="50" height="14.9" fill="#fff"/><rect x="5" y="594.36" width="50" height="15.2" fill="#333"/><rect x="5" y="610.40" width="50" height="14.9" fill="#fff"/><rect x="5" y="626.44" width="50" height="15.2" fill="#333"/><rect x="5" y="642.48" width="50" height="14.9" fill="#fff"/><rect x="5" y="657.38" width="50" height="1.3" fill="#909090"/><rect x="5" y="658.52" width="50" height="14.9" fill="#fff"/><rect x="5" y="674.56" width="50" height="15.2" fill="#333"/><rect x="5" y="690.60" width="50" height="14.9" fill="#fff"/><rect x="5" y="706.64" width="50" height="15.2" fill="#333"/><rect x="5" y="722.68" width="50" height="14.9" fill="#fff"/><rect x="5" y="738.72" width="50" height="15.2" fill="#333"/><rect x="5" y="754.76" width="50" height="14.9" fill="#fff"/><rect x="5" y="769.66" width="50" height="1.3" fill="#909090"/><rect x="5" y="770.80" width="50" height="14.9" fill="#fff"/>
</svg>
<div class="t" style="left:-555.2px;width:600px;text-align:right;top:61.77px;font-size:11.5px;line-height:11.5px;height:11.5px;color:#a2a2a2;font-weight:normal;transform:scaleX(.82);transform-origin:right center;text-shadow:0 0 .3px #999;">C5</div>
<div class="t" style="left:-555.2px;width:600px;text-align:right;top:254.17px;font-size:11.5px;line-height:11.5px;height:11.5px;color:#a2a2a2;font-weight:normal;transform:scaleX(.82);transform-origin:right center;text-shadow:0 0 .3px #999;">C4</div>
<svg style="left:60px;top:48px" width="1381" height="324" viewBox="60 439 1381 324">
<rect x="60" y="449.30" width="1381" height="1" fill="#7c7c7c"/><rect x="60" y="465.36" width="1381" height="1" fill="#454545"/><rect x="60" y="481.42" width="1381" height="1" fill="#454545"/><rect x="60" y="497.48" width="1381" height="1" fill="#454545"/><rect x="60" y="513.54" width="1381" height="1" fill="#454545"/><rect x="60" y="529.60" width="1381" height="1" fill="#454545"/><rect x="60" y="545.66" width="1381" height="1" fill="#454545"/><rect x="60" y="561.72" width="1381" height="1" fill="#454545"/><rect x="60" y="577.78" width="1381" height="1" fill="#454545"/><rect x="60" y="593.84" width="1381" height="1" fill="#454545"/><rect x="60" y="609.90" width="1381" height="1" fill="#454545"/><rect x="60" y="625.96" width="1381" height="1" fill="#454545"/><rect x="60" y="642.02" width="1381" height="1" fill="#7c7c7c"/><rect x="60" y="658.08" width="1381" height="1" fill="#454545"/><rect x="60" y="674.14" width="1381" height="1" fill="#454545"/><rect x="60" y="690.20" width="1381" height="1" fill="#454545"/><rect x="60" y="706.26" width="1381" height="1" fill="#454545"/><rect x="60" y="722.32" width="1381" height="1" fill="#454545"/><rect x="60" y="738.38" width="1381" height="1" fill="#454545"/><rect x="60" y="754.44" width="1381" height="1" fill="#454545"/><rect x="60" y="770.50" width="1381" height="1" fill="#454545"/><rect x="62.00" y="439" width="1" height="324" fill="#565656"/><rect x="112.05" y="439" width="1" height="324" fill="#8a8a8a"/><rect x="162.09" y="439" width="1" height="324" fill="#565656"/><rect x="212.13" y="439" width="1" height="324" fill="#8a8a8a"/><rect x="262.18" y="439" width="1" height="324" fill="#565656"/><rect x="312.23" y="439" width="1" height="324" fill="#8a8a8a"/><rect x="362.27" y="439" width="1" height="324" fill="#565656"/><rect x="412.31" y="439" width="1" height="324" fill="#8a8a8a"/><rect x="462.36" y="439" width="1" height="324" fill="#565656"/><rect x="512.40" y="439" width="1" height="324" fill="#8a8a8a"/><rect x="562.45" y="439" width="1" height="324" fill="#565656"/><rect x="612.50" y="439" width="1" height="324" fill="#8a8a8a"/><rect x="662.54" y="439" width="1" height="324" fill="#565656"/><rect x="712.59" y="439" width="1" height="324" fill="#8a8a8a"/><rect x="762.63" y="439" width="1" height="324" fill="#565656"/><rect x="812.68" y="439" width="1" height="324" fill="#8a8a8a"/><rect x="862.72" y="439" width="1" height="324" fill="#565656"/><rect x="912.76" y="439" width="1" height="324" fill="#8a8a8a"/><rect x="962.81" y="439" width="1" height="324" fill="#565656"/><rect x="1012.86" y="439" width="1" height="324" fill="#8a8a8a"/><rect x="1062.90" y="439" width="1" height="324" fill="#565656"/><rect x="1112.94" y="439" width="1" height="324" fill="#8a8a8a"/><rect x="1162.99" y="439" width="1" height="324" fill="#565656"/><rect x="1213.04" y="439" width="1" height="324" fill="#8a8a8a"/><rect x="1263.08" y="439" width="1" height="324" fill="#565656"/><rect x="1313.12" y="439" width="1" height="324" fill="#8a8a8a"/><rect x="1363.17" y="439" width="1" height="324" fill="#565656"/><rect x="1413.22" y="439" width="1" height="324" fill="#8a8a8a"/>
<rect x="154.8" y="530.20" width="5.2" height="13.8" fill="#6fdc6f"/><rect x="172.3" y="530.20" width="15.9" height="13.8" fill="#6fdc6f"/><rect x="265.2" y="530.20" width="15.0" height="13.8" fill="#6fdc6f"/><rect x="185.2" y="562.28" width="46.6" height="13.8" fill="#6fdc6f"/><rect x="243.3" y="562.28" width="12.0" height="13.8" fill="#6fdc6f"/><rect x="260.3" y="562.28" width="4.5" height="13.8" fill="#6fdc6f"/><rect x="285.5" y="562.28" width="20.8" height="13.8" fill="#6fdc6f"/><rect x="356.7" y="562.28" width="23.3" height="13.8" fill="#6fdc6f"/><rect x="97" y="578.32" width="20.0" height="13.8" fill="#6fdc6f"/><rect x="130" y="578.32" width="19.0" height="13.8" fill="#6fdc6f"/><rect x="305" y="578.32" width="23.0" height="13.8" fill="#6fdc6f"/><rect x="342.7" y="578.32" width="20.6" height="13.8" fill="#6fdc6f"/><rect x="377.5" y="578.32" width="36.7" height="13.8" fill="#6fdc6f"/><rect x="71.8" y="610.40" width="33.7" height="13.8" fill="#6fdc6f"/><rect x="403.8" y="610.40" width="39.2" height="13.8" fill="#6fdc6f"/><rect x="60" y="642.48" width="20.3" height="13.8" fill="#6fdc6f"/><rect x="452" y="642.48" width="36.8" height="13.8" fill="#6fdc6f"/>
<rect x="187.7" y="439" width="2.2" height="324" fill="#e0534f"/>
</svg>
</div>
<div style="left:0px;top:771px;width:1441px;height:688.5px;background:#fefefe;border-radius:5px;overflow:hidden;">
<div style="left:1282.8px;top:48px;width:106.9px;height:641px;background:#efefef;"></div>
<svg style="left:0px;top:48px" width="1441" height="641" viewBox="0 819 1441 641">
<rect x="106.25" y="819" width="1.3" height="641" fill="#4a4a4a"/><rect x="213.15" y="819" width="1.3" height="641" fill="#4a4a4a"/><rect x="320.05" y="819" width="1.3" height="641" fill="#4a4a4a"/><rect x="426.95" y="819" width="1.3" height="641" fill="#4a4a4a"/><rect x="533.85" y="819" width="1.3" height="641" fill="#4a4a4a"/><rect x="640.75" y="819" width="1.3" height="641" fill="#4a4a4a"/><rect x="747.65" y="819" width="1.3" height="641" fill="#4a4a4a"/><rect x="854.55" y="819" width="1.3" height="641" fill="#4a4a4a"/><rect x="961.45" y="819" width="1.3" height="641" fill="#4a4a4a"/><rect x="1068.35" y="819" width="1.3" height="641" fill="#4a4a4a"/><rect x="1175.25" y="819" width="1.3" height="641" fill="#4a4a4a"/><rect x="1282.15" y="819" width="1.3" height="641" fill="#4a4a4a"/><rect x="1389.05" y="819" width="1.3" height="641" fill="#4a4a4a"/>
</svg>
<div style="left:0px;top:48px;width:1px;height:641px;background:#8a8a8a;"></div>
<div style="left:0px;top:687.5px;width:1441px;height:1px;background:#5a5a5a;"></div>
<div style="left:74.9px;top:48px;width:64px;height:397.3px;background:#000;border-radius:0 0 2px 2px;"></div>
<div style="left:181.8px;top:48px;width:64px;height:397.3px;background:#000;border-radius:0 0 2px 2px;"></div>
<div style="left:395.6px;top:48px;width:64px;height:397.3px;background:#000;border-radius:0 0 2px 2px;"></div>
<div class="t" style="left:127.60000000000002px;width:600px;text-align:center;top:418.80px;font-size:13px;line-height:13px;height:13px;color:#d2d2d2;font-weight:bold;text-shadow:0 0 .5px #ccc;">W</div>
<div style="left:502.5px;top:48px;width:64px;height:397.3px;background:#000;border-radius:0 0 2px 2px;"></div>
<div class="t" style="left:234.5px;width:600px;text-align:center;top:418.80px;font-size:13px;line-height:13px;height:13px;color:#d2d2d2;font-weight:bold;text-shadow:0 0 .5px #ccc;">E</div>
<div style="left:716.3px;top:48px;width:64px;height:397.3px;background:#000;border-radius:0 0 2px 2px;"></div>
<div class="t" style="left:448.30000000000007px;width:600px;text-align:center;top:418.80px;font-size:13px;line-height:13px;height:13px;color:#d2d2d2;font-weight:bold;text-shadow:0 0 .5px #ccc;">T</div>
<div style="left:823.2px;top:48px;width:64px;height:397.3px;background:#000;border-radius:0 0 2px 2px;"></div>
<div class="t" style="left:555.2px;width:600px;text-align:center;top:418.80px;font-size:13px;line-height:13px;height:13px;color:#d2d2d2;font-weight:bold;text-shadow:0 0 .5px #ccc;">Y</div>
<div style="left:930.1px;top:48px;width:64px;height:397.3px;background:#000;border-radius:0 0 2px 2px;"></div>
<div class="t" style="left:662.1px;width:600px;text-align:center;top:418.80px;font-size:13px;line-height:13px;height:13px;color:#d2d2d2;font-weight:bold;text-shadow:0 0 .5px #ccc;">U</div>
<div style="left:1143.9px;top:48px;width:64px;height:397.3px;background:#000;border-radius:0 0 2px 2px;"></div>
<div class="t" style="left:875.9000000000001px;width:600px;text-align:center;top:418.80px;font-size:13px;line-height:13px;height:13px;color:#d2d2d2;font-weight:bold;text-shadow:0 0 .5px #ccc;">O</div>
<div style="left:1250.8px;top:48px;width:64px;height:397.3px;background:#000;border-radius:0 0 2px 2px;"></div>
<div class="t" style="left:982.8000000000002px;width:600px;text-align:center;top:418.80px;font-size:13px;line-height:13px;height:13px;color:#d2d2d2;font-weight:bold;text-shadow:0 0 .5px #ccc;">P</div>
<div class="t" style="left:74.15000000000003px;width:600px;text-align:center;top:651.32px;font-size:16.4px;line-height:16.4px;height:16.4px;color:#333;font-weight:bold;">A</div>
<div class="t" style="left:181.05px;width:600px;text-align:center;top:651.32px;font-size:16.4px;line-height:16.4px;height:16.4px;color:#333;font-weight:bold;">S</div>
<div class="t" style="left:287.95000000000005px;width:600px;text-align:center;top:651.32px;font-size:16.4px;line-height:16.4px;height:16.4px;color:#333;font-weight:bold;">D</div>
<div class="t" style="left:394.85000000000014px;width:600px;text-align:center;top:651.32px;font-size:16.4px;line-height:16.4px;height:16.4px;color:#333;font-weight:bold;">F</div>
<div class="t" style="left:501.7500000000001px;width:600px;text-align:center;top:651.32px;font-size:16.4px;line-height:16.4px;height:16.4px;color:#333;font-weight:bold;">G</div>
<div class="t" style="left:608.6500000000001px;width:600px;text-align:center;top:651.32px;font-size:16.4px;line-height:16.4px;height:16.4px;color:#333;font-weight:bold;">H</div>
<div class="t" style="left:715.5500000000001px;width:600px;text-align:center;top:651.32px;font-size:16.4px;line-height:16.4px;height:16.4px;color:#333;font-weight:bold;">J</div>
<div class="t" style="left:822.45px;width:600px;text-align:center;top:651.32px;font-size:16.4px;line-height:16.4px;height:16.4px;color:#333;font-weight:bold;">K</div>
<div class="t" style="left:929.3500000000001px;width:600px;text-align:center;top:651.32px;font-size:16.4px;line-height:16.4px;height:16.4px;color:#333;font-weight:bold;">L</div>
<div class="t" style="left:1036.2500000000002px;width:600px;text-align:center;top:651.32px;font-size:16.4px;line-height:16.4px;height:16.4px;color:#333;font-weight:bold;">;</div>
<div style="left:0px;top:0px;width:1441px;height:48px;background:#3f3f3f;"></div>
<div style="left:0px;top:2px;width:58px;height:44px;background:#222;border-radius:8px;box-shadow:0 2px 5px rgba(0,0,0,.35);"></div>
<svg style="left:16px;top:7px" width="28" height="28" viewBox="16 778 28 28">
<rect x="18.8" y="781.6" width="20.8" height="20.9" rx="2.2" fill="#222" stroke="#b4b4b4" stroke-width="1.2"/>
<g fill="#fff"><rect x="21" y="781.6" width="4.6" height="11.3"/><rect x="26.9" y="781.6" width="4.5" height="11.3"/><rect x="32.8" y="781.6" width="4.3" height="11.3"/></g>
<g fill="#b4b4b4"><rect x="22.8" y="792.9" width="1.5" height="9"/><rect x="28.2" y="792.9" width="1.5" height="9"/><rect x="33.7" y="792.9" width="1.5" height="9"/></g>
</svg>
<div class="t" style="left:626.8px;top:16.84px;font-size:12px;line-height:12px;height:12px;color:#e4e4e4;font-weight:normal;text-shadow:0 0 .4px #ddd;">Octave: +0 (Z/X)</div>
<div class="t" style="left:725.3px;top:16.84px;font-size:12px;line-height:12px;height:12px;color:#e4e4e4;font-weight:normal;text-shadow:0 0 .4px #ddd;">Velocity: 100 (C/V)</div>
<div style="left:1403px;top:5px;width:30px;height:39px;border:1px solid #8c8c8c;border-radius:3px;background:#3f3f3f;box-shadow:0 1px 3px rgba(0,0,0,.35);"></div>
<svg style="left:1411.2px;top:18.5px" width="14" height="14" viewBox="1411.2 789.5 14 14">
<path d="M1413.20 795.10 L1413.20 792.30 Q1413.20 791.50 1414.00 791.50 L1417.20 791.50 M1423.20 795.10 L1423.20 792.30 Q1423.20 791.50 1422.40 791.50 L1419.20 791.50 M1423.20 797.90 L1423.20 800.70 Q1423.20 801.50 1422.40 801.50 L1419.20 801.50 M1413.20 797.90 L1413.20 800.70 Q1413.20 801.50 1414.00 801.50 L1417.20 801.50 " fill="none" stroke="#ffffff" stroke-width="1.55"/>
</svg>
</div>
<div style="left:1449px;top:74px;width:807px;height:1385.5px;background:#2d2d2d;border-radius:5px;overflow:hidden;">
<div style="left:0px;top:0px;width:807px;height:48px;background:#3f3f3f;"></div>
<div style="left:0px;top:2px;width:58px;height:44px;background:#222;border-radius:8px;box-shadow:0 2px 5px rgba(0,0,0,.35);"></div>
<svg style="left:15px;top:8px" width="28" height="28" viewBox="1464 82 28 28">
<g fill="#484848" stroke="#e4e4e4" stroke-width="1.9">
<rect x="1468.2" y="91.2" width="5.4" height="7.7" rx="1.8"/>
<rect x="1482" y="85" width="6" height="5.8" rx="1.8"/>
<rect x="1482" y="99.1" width="6" height="5.9" rx="1.8"/>
</g>
<path d="M1473.9 92.9 L1482.1 88" stroke="#4caf50" stroke-width="1.6" stroke-linecap="round"/>
<path d="M1473.9 96.9 L1482.1 102.1" stroke="#2196f3" stroke-width="1.6" stroke-linecap="round"/>
<circle cx="1473.9" cy="92.9" r="1.9" fill="#4caf50"/><circle cx="1482.1" cy="88" r="1.9" fill="#4caf50"/>
<circle cx="1473.9" cy="96.9" r="1.9" fill="#2196f3"/><circle cx="1482.1" cy="102.1" r="1.9" fill="#2196f3"/>
</svg>
<div style="left:769px;top:5px;width:30px;height:39px;border:1px solid #8c8c8c;border-radius:3px;background:#3f3f3f;box-shadow:0 1px 3px rgba(0,0,0,.35);"></div>
<svg style="left:777.1999999999998px;top:18.5px" width="14" height="14" viewBox="2226.2 92.5 14 14">
<path d="M2228.20 98.10 L2228.20 95.30 Q2228.20 94.50 2229.00 94.50 L2232.20 94.50 M2238.20 98.10 L2238.20 95.30 Q2238.20 94.50 2237.40 94.50 L2234.20 94.50 M2238.20 100.90 L2238.20 103.70 Q2238.20 104.50 2237.40 104.50 L2234.20 104.50 M2228.20 100.90 L2228.20 103.70 Q2228.20 104.50 2229.00 104.50 L2232.20 104.50 " fill="none" stroke="#ffffff" stroke-width="1.55"/>
</svg>
<div style="left:0px;top:48px;width:807px;height:39px;background:#2d2d2d;"></div>
<div style="left:0px;top:87px;width:807px;height:1px;background:#3f3f3f;"></div>
<div class="t" style="left:16.299999999999955px;top:59.35px;font-size:14px;line-height:14px;height:14px;color:#dcdcdc;font-weight:normal;">Instrument Graph</div>
<div style="left:736.4px;top:56.4px;width:55px;height:24px;background:#d32f2f;border-radius:3px;box-shadow:0 2px 4px rgba(0,0,0,.4);"></div>
<div class="t" style="left:464px;width:600px;text-align:center;top:61.44px;font-size:12px;line-height:12px;height:12px;color:#fff;font-weight:normal;">Clear</div>
<svg style="left:0px;top:88px" width="807" height="1298" viewBox="1449 162 807 1298">
<path d="M1912.2 307 C2045.2 307 1513.2 781 1646.2 781" fill="none" stroke="#4caf50" stroke-width="3" stroke-dasharray="8 4"/>
<path d="M1952 781 C2051.5 781 1653.5 1280 1753 1280" fill="none" stroke="#2196f3" stroke-width="3.6"/>
</svg>
<div style="left:10px;top:98px;width:199px;height:315.5px;border:1px solid #3e3e3e;border-radius:5px;background:#2d2d2d;"></div>
<div style="left:19px;top:107px;width:181px;height:27.5px;border:1px solid #555;border-radius:4px;background:#1f1f1f;box-shadow:0 2px 4px rgba(0,0,0,.3);"></div>
<div class="t" style="left:28px;top:114.24px;font-size:12px;line-height:12px;height:12px;color:#b0b0b0;font-weight:normal;">Search nodes...</div>
<div class="t" style="left:19px;top:147.84px;font-size:12px;line-height:12px;height:12px;color:#dcdcdc;font-weight:bold;">NODE CATEGORIES</div>
<div style="left:19px;top:175px;width:181px;height:41.6px;border:1px solid #565656;border-radius:3px;background:#3d3d3d;"></div>
<div class="t" style="left:30px;top:186.60px;font-size:13px;line-height:13px;height:13px;color:#dedede;font-weight:normal;">Generators</div>
<div style="left:19px;top:221px;width:181px;height:41.6px;border:1px solid #565656;border-radius:3px;background:#3d3d3d;"></div>
<div class="t" style="left:30px;top:232.60px;font-size:13px;line-height:13px;height:13px;color:#dedede;font-weight:normal;">Utilities</div>
<div style="left:19px;top:267px;width:181px;height:41.6px;border:1px solid #565656;border-radius:3px;background:#3d3d3d;"></div>
<div class="t" style="left:30px;top:278.60px;font-size:13px;line-height:13px;height:13px;color:#dedede;font-weight:normal;">Effects</div>
<div style="left:19px;top:313px;width:181px;height:41.6px;border:1px solid #565656;border-radius:3px;background:#3d3d3d;"></div>
<div class="t" style="left:30px;top:324.60px;font-size:13px;line-height:13px;height:13px;color:#dedede;font-weight:normal;">Inputs</div>
<div style="left:19px;top:359px;width:181px;height:41.6px;border:1px solid #565656;border-radius:3px;background:#3d3d3d;"></div>
<div class="t" style="left:30px;top:370.60px;font-size:13px;line-height:13px;height:13px;color:#dedede;font-weight:normal;">Outputs</div>
<div style="left:263px;top:184px;width:200px;height:97.7px;border:2px solid #555;border-radius:7px;background:#2d2d2d;"></div>
<div class="t" style="left:63px;width:600px;text-align:center;top:205.00px;font-size:13px;line-height:13px;height:13px;color:#fff;font-weight:bold;">MIDI Input</div>
<div class="t" style="left:63px;width:600px;text-align:center;top:241.09px;font-size:11px;line-height:11px;height:11px;color:#aaa;font-weight:normal;">Receives MIDI from track</div>
<div class="t" style="left:425px;top:232.98px;font-size:9px;line-height:9px;height:9px;color:#999;font-weight:normal;">MIDI</div>
<div class="t" style="left:425px;top:252.98px;font-size:9px;line-height:9px;height:9px;color:#999;font-weight:normal;">Out</div>
<div style="left:456.2px;top:226px;width:14px;height:14px;background:#4caf50;border:2px solid #2e7d32;border-radius:2.5px;"></div>
<div style="left:207.3px;top:429px;width:295.7px;height:556.5px;border:2px solid #555;border-radius:7px;background:#2d2d2d;"></div>
<div class="t" style="left:57px;width:600px;text-align:center;top:450.00px;font-size:13px;line-height:13px;height:13px;color:#fff;font-weight:bold;">Multi Sampler</div>
<div class="t" style="left:225.20000000000005px;top:484.54px;font-size:10px;line-height:10px;height:10px;color:#d0d0d0;font-weight:normal;">Gain: 1.00</div>
<div style="left:227px;top:521px;width:163px;height:6.2px;background:#222;border-radius:3px;"></div>
<div style="left:227px;top:521px;width:65px;height:6.2px;background:#1a56a8;border-radius:3px 0 0 3px;"></div>
<div style="left:298.8px;top:514.8px;width:18.4px;height:18.4px;background:#fff;border-radius:50%;"></div>
<div class="t" style="left:225.20000000000005px;top:563.53px;font-size:10px;line-height:10px;height:10px;color:#d0d0d0;font-weight:normal;">Attack: 0.01 ss</div>
<div style="left:227px;top:600px;width:163px;height:6.2px;background:#222;border-radius:3px;"></div>
<div style="left:227px;top:600px;width:11.299999999999955px;height:6.2px;background:#1a56a8;border-radius:3px 0 0 3px;"></div>
<div style="left:245.8px;top:593.8px;width:18.4px;height:18.4px;background:#fff;border-radius:50%;"></div>
<div class="t" style="left:225.20000000000005px;top:642.53px;font-size:10px;line-height:10px;height:10px;color:#d0d0d0;font-weight:normal;">Release: 0.10 ss</div>
<div style="left:227px;top:679px;width:163px;height:6.2px;background:#222;border-radius:3px;"></div>
<div style="left:227px;top:679px;width:12px;height:6.2px;background:#1a56a8;border-radius:3px 0 0 3px;"></div>
<div style="left:246.8px;top:672.8px;width:18.4px;height:18.4px;background:#fff;border-radius:50%;"></div>
<div class="t" style="left:225.20000000000005px;top:721.03px;font-size:10px;line-height:10px;height:10px;color:#d0d0d0;font-weight:normal;">Transpose: 0.00 semi semi</div>
<div style="left:227px;top:757.7px;width:163px;height:6.2px;background:#222;border-radius:3px;"></div>
<div style="left:227px;top:757.7px;width:65px;height:6.2px;background:#1a56a8;border-radius:3px 0 0 3px;"></div>
<div style="left:298.8px;top:751.5px;width:18.4px;height:18.4px;background:#fff;border-radius:50%;"></div>
<div class="t" style="left:216px;top:706.98px;font-size:9px;line-height:9px;height:9px;color:#999;font-weight:normal;">MIDI</div>
<div class="t" style="left:216.5px;top:727.18px;font-size:9px;line-height:9px;height:9px;color:#999;font-weight:normal;">In</div>
<div class="t" style="left:461px;top:706.98px;font-size:9px;line-height:9px;height:9px;color:#999;font-weight:normal;">Audio</div>
<div class="t" style="left:461px;top:726.98px;font-size:9px;line-height:9px;height:9px;color:#999;font-weight:normal;">Out</div>
<div style="left:190.2px;top:700px;width:14px;height:14px;background:#4caf50;border:2px solid #2e7d32;border-radius:2.5px;"></div>
<div style="left:496px;top:700px;width:14px;height:14px;background:#2196f3;border:2px solid #1976d2;border-radius:50%;"></div>
<div style="left:225.4px;top:792.2px;width:263.6px;height:23.6px;background:#1e1e1e;border-radius:7px;box-shadow:0 1px 3px rgba(0,0,0,.3);"></div>
<div class="t" style="left:57px;width:600px;text-align:center;top:797.53px;font-size:10px;line-height:10px;height:10px;color:#fff;font-weight:normal;text-shadow:0 0 .4px currentColor;">Add Sample Layer</div>
<div style="left:225.4px;top:820px;width:263.6px;height:23.8px;background:#1e1e1e;border-radius:7px;box-shadow:0 1px 3px rgba(0,0,0,.3);"></div>
<div class="t" style="left:57px;width:600px;text-align:center;top:825.53px;font-size:10px;line-height:10px;height:10px;color:#fff;font-weight:normal;text-shadow:0 0 .4px currentColor;">Import Folder...</div>
<div style="left:225.4000000000001px;top:848.2px;width:263.6px;height:120px;border:1px solid #474747;border-radius:3px;overflow:hidden;background:#2b2b2b;">
<div style="left:0.0px;top:0.0px;width:258px;height:32.3px;background:#333;"></div>
<div style="left:257.6px;top:0.0px;width:5px;height:120px;background:#2b2b2b;"></div>
<div style="left:0.6px;top:32.1px;width:258px;height:1px;background:#484848;"></div>
<div class="t" style="left:2.599999999999909px;top:10.48px;font-size:9px;line-height:9px;height:9px;color:#c4c4c4;font-weight:bold;">File</div>
<div class="t" style="left:64.59999999999991px;top:10.48px;font-size:9px;line-height:9px;height:9px;color:#c4c4c4;font-weight:bold;">Range</div>
<div class="t" style="left:116.59999999999991px;top:10.48px;font-size:9px;line-height:9px;height:9px;color:#c4c4c4;font-weight:bold;">Root</div>
<div class="t" style="left:142.29999999999995px;top:10.48px;font-size:9px;line-height:9px;height:9px;color:#c4c4c4;font-weight:bold;">Vel</div>
<div style="left:0.6px;top:63.1px;width:258px;height:1px;background:#363636;"></div>
<div class="t" style="left:3.599999999999909px;top:41.43px;font-size:10px;line-height:10px;height:10px;color:#8e8e8e;font-weight:normal;">Sum_SH…</div>
<div class="t" style="left:65.59999999999991px;top:41.43px;font-size:10px;line-height:10px;height:10px;color:#8e8e8e;font-weight:normal;">C-1-G2</div>
<div class="t" style="left:117.39999999999986px;top:41.43px;font-size:10px;line-height:10px;height:10px;color:#8e8e8e;font-weight:normal;">F2</div>
<div class="t" style="left:143.0999999999999px;top:41.43px;font-size:10px;line-height:10px;height:10px;color:#8e8e8e;font-weight:normal;">63-1…</div>
<div style="left:178.6px;top:35.8px;width:28px;height:24px;background:#4f4f4f;border-radius:3px;box-shadow:0 1px 2px rgba(0,0,0,.3);"></div>
<div class="t" style="left:-107.40000000000009px;width:600px;text-align:center;top:44.08px;font-size:9px;line-height:9px;height:9px;color:#fff;font-weight:normal;text-shadow:0 0 .4px currentColor;">Edit</div>
<div style="left:209.6px;top:35.8px;width:25px;height:24px;background:#292929;border-radius:3px;"></div>
<div class="t" style="left:-77.90000000000009px;width:600px;text-align:center;top:44.08px;font-size:9px;line-height:9px;height:9px;color:#fff;font-weight:normal;text-shadow:0 0 .4px currentColor;">Del</div>
<div style="left:0.6px;top:94.1px;width:258px;height:1px;background:#363636;"></div>
<div class="t" style="left:3.599999999999909px;top:72.43px;font-size:10px;line-height:10px;height:10px;color:#8e8e8e;font-weight:normal;">Sum_SH…</div>
<div class="t" style="left:65.59999999999991px;top:72.43px;font-size:10px;line-height:10px;height:10px;color:#8e8e8e;font-weight:normal;">C-1-G2</div>
<div class="t" style="left:117.39999999999986px;top:72.43px;font-size:10px;line-height:10px;height:10px;color:#8e8e8e;font-weight:normal;">F2</div>
<div class="t" style="left:143.0999999999999px;top:72.43px;font-size:10px;line-height:10px;height:10px;color:#8e8e8e;font-weight:normal;">0-62</div>
<div style="left:178.6px;top:66.8px;width:28px;height:24px;background:#4f4f4f;border-radius:3px;box-shadow:0 1px 2px rgba(0,0,0,.3);"></div>
<div class="t" style="left:-107.40000000000009px;width:600px;text-align:center;top:75.08px;font-size:9px;line-height:9px;height:9px;color:#fff;font-weight:normal;text-shadow:0 0 .4px currentColor;">Edit</div>
<div style="left:209.6px;top:66.8px;width:25px;height:24px;background:#292929;border-radius:3px;"></div>
<div class="t" style="left:-77.90000000000009px;width:600px;text-align:center;top:75.08px;font-size:9px;line-height:9px;height:9px;color:#fff;font-weight:normal;text-shadow:0 0 .4px currentColor;">Del</div>
<div style="left:0.6px;top:125.1px;width:258px;height:1px;background:#363636;"></div>
<div class="t" style="left:3.599999999999909px;top:103.43px;font-size:10px;line-height:10px;height:10px;color:#8e8e8e;font-weight:normal;">Sum_SH…</div>
<div class="t" style="left:65.59999999999991px;top:103.43px;font-size:10px;line-height:10px;height:10px;color:#8e8e8e;font-weight:normal;">G2-A#2</div>
<div class="t" style="left:117.39999999999986px;top:103.43px;font-size:10px;line-height:10px;height:10px;color:#8e8e8e;font-weight:normal;">A2</div>
<div class="t" style="left:143.0999999999999px;top:103.43px;font-size:10px;line-height:10px;height:10px;color:#8e8e8e;font-weight:normal;">63-1…</div>
<div style="left:178.6px;top:97.8px;width:28px;height:24px;background:#4f4f4f;border-radius:3px;box-shadow:0 1px 2px rgba(0,0,0,.3);"></div>
<div class="t" style="left:-107.40000000000009px;width:600px;text-align:center;top:106.08px;font-size:9px;line-height:9px;height:9px;color:#fff;font-weight:normal;text-shadow:0 0 .4px currentColor;">Edit</div>
<div style="left:209.6px;top:97.8px;width:25px;height:24px;background:#292929;border-radius:3px;"></div>
<div class="t" style="left:-77.90000000000009px;width:600px;text-align:center;top:106.08px;font-size:9px;line-height:9px;height:9px;color:#fff;font-weight:normal;text-shadow:0 0 .4px currentColor;">Del</div>
</div>
<div style="left:314px;top:1157px;width:200px;height:98px;border:2px solid #4caf50;border-radius:7px;background:#2d2d2d;box-shadow:0 0 9px rgba(76,175,80,.55);"></div>
<div class="t" style="left:114px;width:600px;text-align:center;top:1178.00px;font-size:13px;line-height:13px;height:13px;color:#fff;font-weight:bold;">Audio Output</div>
<div class="t" style="left:114px;width:600px;text-align:center;top:1213.69px;font-size:11px;line-height:11px;height:11px;color:#aaa;font-weight:normal;">Final output to speakers</div>
<div class="t" style="left:323px;top:1206.18px;font-size:9px;line-height:9px;height:9px;color:#aaa;font-weight:normal;">Audio</div>
<div class="t" style="left:323px;top:1226.18px;font-size:9px;line-height:9px;height:9px;color:#aaa;font-weight:normal;">In</div>
<div class="t" style="left:472px;top:1206.18px;font-size:9px;line-height:9px;height:9px;color:#aaa;font-weight:normal;">Audio</div>
<div class="t" style="left:472px;top:1226.18px;font-size:9px;line-height:9px;height:9px;color:#aaa;font-weight:normal;">Out</div>
<div style="left:297px;top:1199px;width:14px;height:14px;background:#2196f3;border:2px solid #1976d2;border-radius:50%;"></div>
<div style="left:507px;top:1199px;width:14px;height:14px;background:#2196f3;border:2px solid #1976d2;border-radius:50%;"></div>
<svg style="left:34px;top:606px" width="18" height="26" viewBox="1483 680 18 26">
<path d="M1484.9 682 L1484.9 697.9 L1488.3 696.5 L1490.6 699.9 Q1492 701 1493.1 699.4 L1493.1 694.7 L1496.6 693.3 Z" fill="#000" stroke="#fff" stroke-width="1.1" stroke-linejoin="round"/>
</svg>
</div>
</div></body></html>
